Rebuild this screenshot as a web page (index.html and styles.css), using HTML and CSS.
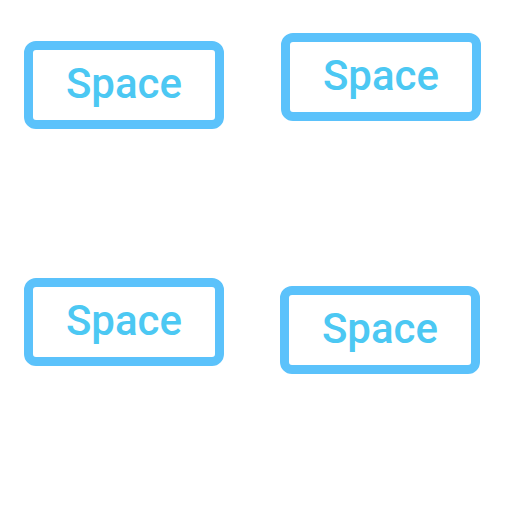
FILE: index.html
```html
<!DOCTYPE html>
<html>
<head>
<meta charset="utf-8">
<link rel="stylesheet" href="styles.css">
</head>
<body>
<div class="grid">
  <div class="cell c1"><div class="key">Space</div></div>
  <div class="cell c2"><div class="key">Space</div></div>
  <div class="cell c3"><div class="key">Space</div></div>
  <div class="cell c4"><div class="key">Space</div></div>
</div>
</body>
</html>
```
FILE: styles.css
```css
html, body {
  margin: 0;
  padding: 0;
  background: #ffffff;
}
.grid {
  display: grid;
  grid-template-columns: 256px 256px;
  grid-template-rows: 256px 256px;
  width: 512px;
  height: 512px;
}
.cell {
  display: flex;
  align-items: flex-start;
  justify-content: flex-start;
}
.key {
  box-sizing: border-box;
  width: 200px;
  height: 88px;
  border: 9px solid #5bc2fb;
  border-radius: 12px;
  display: flex;
  align-items: center;
  justify-content: center;
  font-family: Roboto, "Liberation Sans", sans-serif;
  font-weight: 500;
  font-size: 42px;
  color: #4cc8f3;
  padding-bottom: 4px;
}
.c1 .key { margin: 41px 0 0 24px; }
.c2 .key { margin: 33px 0 0 25px; }
.c3 .key { margin: 22px 0 0 24px; }
.c4 .key { margin: 30px 0 0 24px; }
```
